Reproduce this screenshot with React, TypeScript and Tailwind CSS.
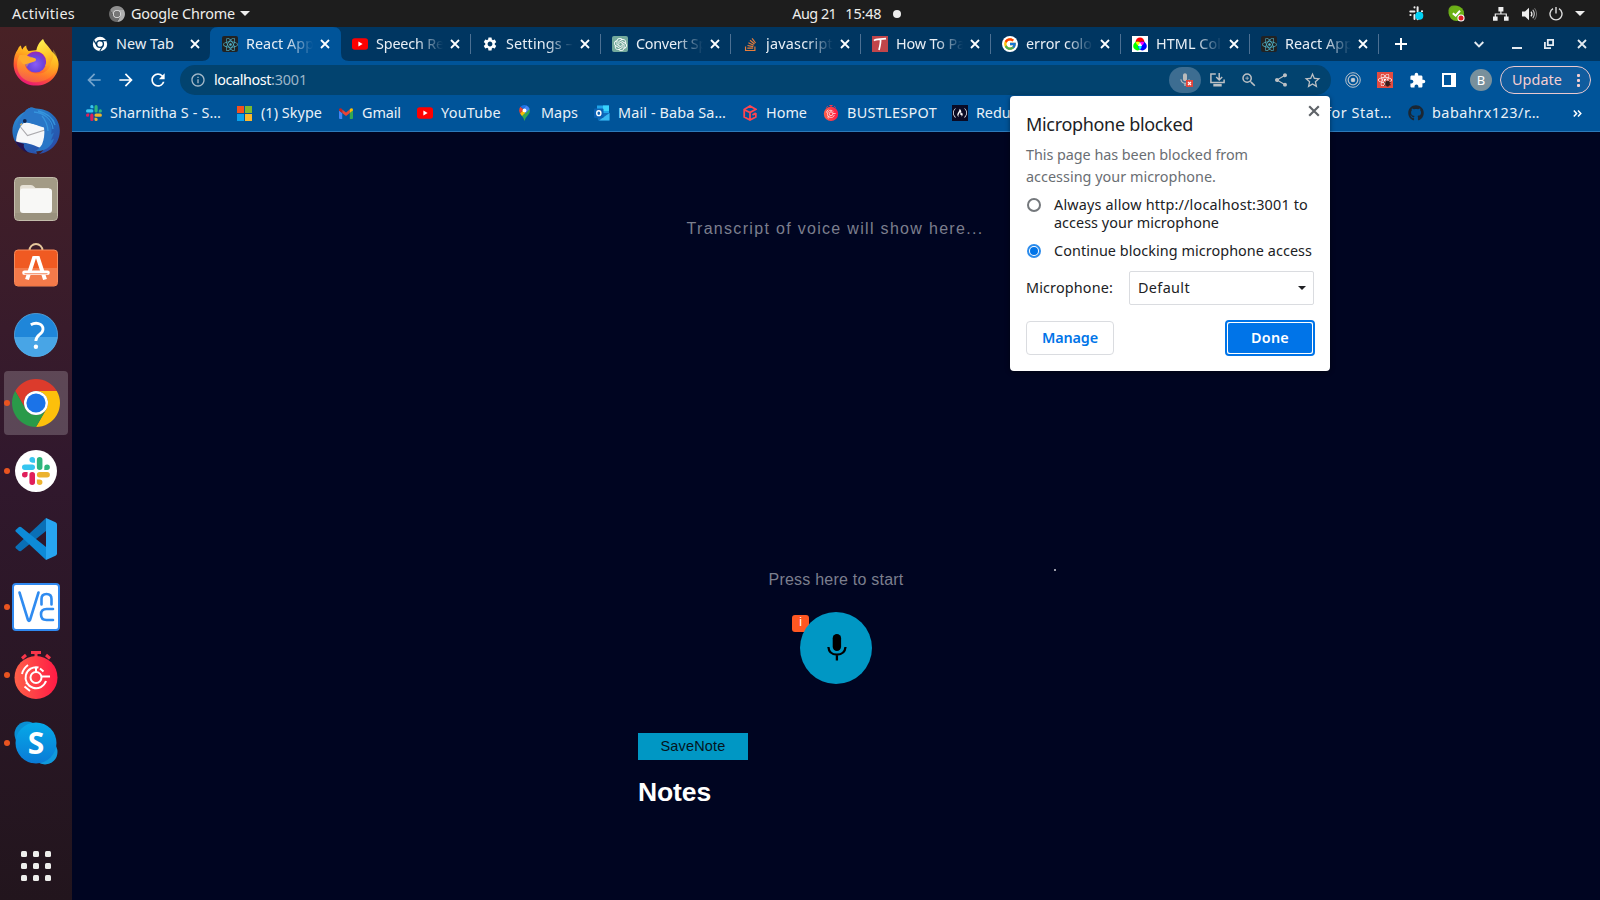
import { useLayoutEffect, useRef } from "react";
import type { ReactNode } from "react";
import { FaGithub, FaReact, FaFreeCodeCamp, FaStackOverflow } from "react-icons/fa";
import { FcGoogle } from "react-icons/fc";
import { SiOpenai } from "react-icons/si";
import {
  MdArrowBack,
  MdArrowForward,
  MdExtension,
  MdInfoOutline,
  MdMic,
  MdRefresh,
  MdSettings,
  MdShare,
  MdStarBorder,
  MdZoomIn,
} from "react-icons/md";

/** One line of text whose tracking is adjusted so that it spans `w` pixels. */
function Label({ w, className = "", children }: { w: number; className?: string; children: string }) {
  const ref = useRef<HTMLSpanElement>(null);
  useLayoutEffect(() => {
    const el = ref.current;
    if (!el) return;
    el.style.letterSpacing = "0px";
    const natural = el.getBoundingClientRect().width;
    el.style.letterSpacing = `${(w - natural) / children.length}px`;
  }, [w, children]);
  return (
    <span ref={ref} className={`inline-block whitespace-pre shrink-0 ${className}`}>
      {children}
    </span>
  );
}

function Close({ className = "", size = "size-2.5" }: { className?: string; size?: string }) {
  return (
    <svg viewBox="0 0 10 10" className={`shrink-0 ${size} ${className}`}>
      <path d="M1 1 9 9M9 1 1 9" stroke="currentColor" strokeWidth="1.8" />
    </svg>
  );
}

function SlackMark({ className = "" }: { className?: string }) {
  return (
    <svg viewBox="0 0 54 54" className={className}>
      <path fill="#36C5F0" d="M19.712.133a5.381 5.381 0 0 0-5.376 5.387 5.381 5.381 0 0 0 5.376 5.386h5.376V5.52A5.381 5.381 0 0 0 19.712.133m0 14.365H5.376A5.381 5.381 0 0 0 0 19.884a5.381 5.381 0 0 0 5.376 5.387h14.336a5.381 5.381 0 0 0 5.376-5.387 5.381 5.381 0 0 0-5.376-5.386" />
      <path fill="#2EB67D" d="M53.76 19.884a5.381 5.381 0 0 0-5.376-5.386 5.381 5.381 0 0 0-5.376 5.386v5.387h5.376a5.381 5.381 0 0 0 5.376-5.387m-14.336 0V5.52A5.381 5.381 0 0 0 34.048.133a5.381 5.381 0 0 0-5.376 5.387v14.364a5.381 5.381 0 0 0 5.376 5.387 5.381 5.381 0 0 0 5.376-5.387" />
      <path fill="#ECB22E" d="M34.048 54a5.381 5.381 0 0 0 5.376-5.387 5.381 5.381 0 0 0-5.376-5.386h-5.376v5.386A5.381 5.381 0 0 0 34.048 54m0-14.365h14.336a5.381 5.381 0 0 0 5.376-5.386 5.381 5.381 0 0 0-5.376-5.387H34.048a5.381 5.381 0 0 0-5.376 5.387 5.381 5.381 0 0 0 5.376 5.386" />
      <path fill="#E01E5A" d="M0 34.249a5.381 5.381 0 0 0 5.376 5.386 5.381 5.381 0 0 0 5.376-5.386v-5.387H5.376A5.381 5.381 0 0 0 0 34.25m14.336-.001v14.364A5.381 5.381 0 0 0 19.712 54a5.381 5.381 0 0 0 5.376-5.387V34.25a5.381 5.381 0 0 0-5.376-5.387 5.381 5.381 0 0 0-5.376 5.387" />
    </svg>
  );
}

function SlackTrayMark() {
  return (
    <svg viewBox="0 0 15 15" className="mr-6 size-[15px]">
      <g stroke="#eee" strokeWidth="2" strokeLinecap="round" fill="none">
        <path d="M5.500 1.200v.2M1.300 5.400H5.400M8.600 1.300V5.200M12.900 5.300h.2M1.400 9h.2M5.500 9V13M8.800 9H12M8.600 13v.2" />
      </g>
      <circle cx="10.300" cy="9.800" r="4" fill="#00d2f5" />
    </svg>
  );
}

function ChromeMark({ className, colors, ring, core }: { className: string; colors: [string, string, string]; ring: string; core: string }) {
  return (
    <svg viewBox="0 0 48 48" className={className}>
      <path fill={colors[0]} d="M3.22 12A24 24 0 0 1 44.78 12L24 12A12 12 0 0 0 13.6 30Z" />
      <path fill={colors[1]} d="M44.78 12A24 24 0 0 1 24 48L34.39 30A12 12 0 0 0 24 12Z" />
      <path fill={colors[2]} d="M24 48A24 24 0 0 1 3.22 12L13.6 30A12 12 0 0 0 34.39 30Z" />
      <circle cx="24" cy="24" r="12" fill={ring} />
      <circle cx="24" cy="24" r="9.6" fill={core} />
    </svg>
  );
}

function NewTabMark() {
  return (
    <svg viewBox="0 0 16 16" className="size-4">
      <circle cx="8" cy="8" r="7.2" fill="#fff" />
      <circle cx="8" cy="8" r="3.4" fill="none" stroke="#003661" strokeWidth="1.4" />
      <path d="M8 4.6h6.4M5 9.7 1.9 4.4M11 9.7 7.8 15" stroke="#003661" strokeWidth="1.2" />
    </svg>
  );
}

function ReactTile() {
  return (
    <span className="flex size-4 items-center justify-center rounded-[2px] bg-[#222]">
      <FaReact className="size-[15px] text-[#4fb3c8]" />
    </span>
  );
}

function YoutubeMark() {
  return (
    <svg viewBox="0 0 16 16" className="size-4">
      <rect x="0" y="2.2" width="16" height="11.6" rx="2.8" fill="#f00" />
      <path d="M6.4 5.6v4.8L10.6 8z" fill="#fff" />
    </svg>
  );
}

function TecmintMark() {
  return (
    <svg viewBox="0 0 16 16" className="size-4">
      <rect width="16" height="16" fill="#c1454a" />
      <path d="M2 4.6C4 2.6 8 3.6 14 2.6M8.6 3.4C8.8 7 8 10 7 14" fill="none" stroke="#fff" strokeWidth="1.7" />
    </svg>
  );
}

function GoogleTile() {
  return (
    <span className="flex size-4 items-center justify-center rounded-full bg-white">
      <FcGoogle className="size-[14px]" />
    </span>
  );
}

function ColorTile() {
  return (
    <svg viewBox="0 0 16 16" className="size-4">
      <rect width="16" height="16" fill="#fff" />
      <circle cx="8" cy="5.8" r="4.4" fill="#f00" />
      <circle cx="5.6" cy="10" r="4.4" fill="#0f0" />
      <circle cx="10.4" cy="10" r="4.4" fill="#00f" />
      <path d="M3.8 6.2A4.2 4.2 0 0 1 8 6.6L6.4 9.4A4.2 4.2 0 0 1 3.8 6.2z" fill="#ff0" />
      <path d="M12.2 6.2A4.2 4.2 0 0 0 8 6.6L9.6 9.4A4.2 4.2 0 0 0 12.2 6.2z" fill="#f0f" />
      <path d="M8 13.4A4.2 4.2 0 0 1 6.4 9.4H9.6A4.2 4.2 0 0 1 8 13.4z" fill="#0ff" />
      <path d="M8 6.2 10.200 9.900H5.800z" fill="#fff" />
    </svg>
  );
}

type TabInfo = { title: string; w: number; icon: ReactNode; narrow?: boolean; active?: boolean; divider?: boolean };

const tabs: TabInfo[] = [
  { title: "New Tab", w: 58, icon: <NewTabMark /> },
  { title: "React App", w: 68, icon: <ReactTile />, active: true },
  { title: "Speech Re", w: 68, icon: <YoutubeMark />, divider: true },
  { title: "Settings –", w: 67, icon: <MdSettings className="size-4 text-white" />, divider: true },
  {
    title: "Convert Sp",
    w: 71,
    icon: (
      <span className="flex size-4 items-center justify-center rounded-[2px] bg-[#74aa9c]">
        <SiOpenai className="size-[13px] text-white" />
      </span>
    ),
    divider: true,
  },
  { title: "javascript", w: 67, icon: <FaStackOverflow className="size-[15px] text-[#e87d3a]" />, divider: true },
  { title: "How To Pa", w: 69, icon: <TecmintMark />, divider: true },
  { title: "error colo", w: 66, icon: <GoogleTile />, divider: true },
  { title: "HTML Col", w: 65, icon: <ColorTile />, narrow: true, divider: true },
  { title: "React App", w: 68, icon: <ReactTile />, narrow: true, divider: true },
];

function Tab({ tab }: { tab: TabInfo }) {
  return (
    <div className={`relative flex h-full shrink-0 items-center pl-3 ${tab.narrow ? "w-[129px]" : "w-[130px]"} ${tab.active ? "z-10" : ""}`}>
      {tab.active && (
        <svg viewBox="0 0 148 34" className="absolute -left-2 top-0 h-[34px] w-[148px]">
          <path d="M0 34Q8 34 8 26V8Q8 0 16 0H131Q139 0 139 8V26Q139 34 147 34Z" fill="#005499" />
        </svg>
      )}
      <span className="relative flex size-4 shrink-0 items-center justify-center">{tab.icon}</span>
      <span
        className={`relative ml-2 flex shrink-0 ${tab.narrow ? "w-[66px]" : "w-[67px]"} ${
          tab.title === "New Tab" ? "" : "[mask-image:linear-gradient(90deg,#000_60%,transparent_100%)]"
        }`}
      >
        <Label w={tab.w}>{tab.title}</Label>
      </span>
      <Close className="relative ml-[7px] text-white" />
      {tab.divider && <span className="absolute -right-px top-[7px] h-5 w-px bg-[#4c7093]" />}
    </div>
  );
}

function TopBar() {
  return (
    <header className="grid h-[27px] shrink-0 grid-cols-3 items-center bg-[#1d1d1d] text-[#eeeeec]">
      <div className="flex items-center pl-3">
        <Label w={63}>Activities</Label>
        <ChromeMark className="ml-[34px] size-4" colors={["#909090", "#b0b0b0", "#6c6c6c"]} ring="#f2f2f2" core="#777" />
        <Label w={104} className="ml-1.5">Google Chrome</Label>
        <svg viewBox="0 0 10 5" className="ml-[5px] h-[5px] w-2.5">
          <path d="M0 0h10L5 5z" fill="#eee" />
        </svg>
      </div>
      <div className="flex items-center pl-[259px]">
        <Label w={44}>Aug 21</Label>
        <Label w={36} className="ml-[9px]">15:48</Label>
        <span className="ml-3 size-2 shrink-0 rounded-full bg-[#eee]" />
      </div>
      <div className="flex items-center justify-end pr-[15px]">
        <SlackTrayMark />
        <svg viewBox="0 0 17 17" className="mr-[28px] size-[17px]">
          <rect x=".5" y=".5" width="12" height="12" rx="5" fill="#6aa51d" />
          <circle cx="8.5" cy="8.5" r="7.6" fill="#6cb116" />
          <path d="M4.8 8.2 7.6 10.6 12 5.8" fill="none" stroke="#fff" strokeWidth="2" />
          <circle cx="13" cy="13" r="3.6" fill="#fff" />
          <circle cx="13" cy="13" r="2.5" fill="#e01e25" />
        </svg>
        <svg viewBox="0 0 16 14" className="mr-[13px] h-3.5 w-4" fill="#eee">
          <path d="M5.4 0h5v4.4h-5zM0 9.4h4.6v4.4H0zM11 9.4h4.6v4.4H11z" />
          <path d="M7.9 4v3M2.3 10V7h11v3" fill="none" stroke="#eee" strokeWidth="1.2" />
        </svg>
        <svg viewBox="0 0 15 14" className="mr-[12px] h-3.5 w-[15px]" fill="none" stroke="#eee">
          <path d="M0 4.5h3L7 .8v12.4L3 9.5H0z" fill="#eee" stroke="none" />
          <path d="M9 4.6q1.8 2.4 0 4.8" strokeWidth="1.3" />
          <path d="M10.8 2.8q3 4.2 0 8.4" strokeWidth="1.1" stroke="#ccc" />
          <path d="M12.6 1.2q4 5.8 0 11.6" strokeWidth="1" stroke="#777" />
        </svg>
        <svg viewBox="0 0 14 14" className="mr-[12px] size-3.5" fill="none" stroke="#ddd" strokeWidth="1.4">
          <path d="M4 1.7a6 6 0 1 0 6 0M7 0v6.6" />
        </svg>
        <svg viewBox="0 0 10 5" className="h-[5px] w-2.5">
          <path d="M0 0h10L5 5z" fill="#eee" />
        </svg>
      </div>
    </header>
  );
}

function DockItem({ children, running, active }: { children: ReactNode; running?: boolean; active?: boolean }) {
  return (
    <div className={`relative flex size-16 shrink-0 items-center justify-center rounded ${active ? "bg-white/20" : ""}`}>
      {running && <span className="absolute left-0 top-[29px] size-1.5 rounded-full bg-[#e95420]" />}
      {children}
    </div>
  );
}

function FirefoxIcon() {
  return (
    <svg viewBox="0 0 48 48" className="size-12">
      <defs>
        <linearGradient id="ffBody" x1=".75" y1=".05" x2=".3" y2="1">
          <stop offset="0" stopColor="#ffe226" />
          <stop offset=".35" stopColor="#ffa51f" />
          <stop offset=".65" stopColor="#ff5a2f" />
          <stop offset="1" stopColor="#e8127c" />
        </linearGradient>
        <linearGradient id="ffTail" x1=".4" y1="0" x2=".7" y2="1">
          <stop offset="0" stopColor="#fff04f" />
          <stop offset=".6" stopColor="#ffc62b" />
          <stop offset="1" stopColor="#ff9a20" />
        </linearGradient>
        <radialGradient id="ffGlobe" cx=".5" cy=".6" r=".6">
          <stop offset="0" stopColor="#8a5cf5" />
          <stop offset=".6" stopColor="#6b45dd" />
          <stop offset="1" stopColor="#9a27b4" />
        </radialGradient>
      </defs>
      <path d="M6 10c.6-1.6 1.6-2.8 3-3.4.1 1.6.6 3 1.6 4 .4-1.6 1.6-3.2 3.6-4 0 2.2.8 4 2.4 5.4L34 10C41 12 46.600 18 46.600 25 46.600 37 37 46.600 24 46.600S1.600 37 1.600 25C1.600 19 3 14 6 10Z" fill="url(#ffBody)" />
      <circle cx="23.600" cy="23" r="10.600" fill="url(#ffGlobe)" />
      <path d="M31 0c-1 3 1 6 3.600 9.600C38 14 38 20 35 24c3-1 4-3 4.400-5 .8 9-5 15.600-13 15.600C17 35 12 29 12.600 22c.2 3 1 5 2.400 6 1-3 3-4.600 6-5 2-.2 3.400-1 3-2.200-.6-1.600-3-1.800-6-3.200-3-1-6-2-9.600-1.600C4 20 4 30 8 36c4 6 12 8 18 7 11-1 19-9 19.600-18C46 17 43 13 41 10.600c0 1.400 0 2 .2 3C37 8 33 6 31 0Z" fill="url(#ffTail)" opacity=".4" />
      <path d="M31 0c-3 2.600-6.400 7-6.600 12 5 .4 9 4 9.800 8 .6 3-.2 5.600-1.400 7.600 5-2 8-6 8.600-11C39 8 33 6 31 0Z" fill="url(#ffTail)" />
      <path d="M7 16.500c5-1.600 9 .6 11 1.800 2.600.6 6 .6 6 2.300 0 1.700-3 2.200-5 3-3 .8-5 2.400-8 1.400-2-2-4-5-4-8.500Z" fill="#ffab2c" />
    </svg>
  );
}

function ThunderbirdIcon() {
  return (
    <svg viewBox="0 0 48 48" className="size-12">
      <defs>
        <linearGradient id="tbBody" x1=".2" y1="0" x2=".8" y2="1">
          <stop offset="0" stopColor="#2f8fd6" />
          <stop offset=".5" stopColor="#2266b8" />
          <stop offset="1" stopColor="#2c4aa6" />
        </linearGradient>
      </defs>
      <path d="M19 .6c2-.4 3 .6 5 1 13 .2 23.600 9 23.800 21.600C48 36 39 45 27 47c3-2 5-4 5-6l-8 3c1 1 .4 2 1 3C10 46 .2 36 .4 23.600.600 15 6 8 13 4.600 14 2.600 17 1 19 .6Z" fill="url(#tbBody)" />
      <path d="M4 36C12 34 22 38 31 42l3-22-21-5C8 18 4 27 4 36Z" fill="#f6f7f9" />
      <path d="M8.500 20 15.500 28.500 33 23" fill="none" stroke="#aaa9ad" strokeWidth="1.100" />
      <path d="M3 34c3 6 8 10 14 12-4-3-6-6-5-9Z" fill="#24124f" />
      <path d="M19 .6c-4 1-6 3-7 6-4 4-7 9-7 15 2-4 5-6 9-6 5 0 8 2 18 5 1 6 0 12-2 17-2 3-5 6-8 7 10 0 18-4 20-13l-3 2 3-8-3 2c2-8-1-16-9-20-3-4-7-6-11-7Z" fill="#2976c7" />
      <path d="M22 5c10 1 18 7 19 17M26 4c9 2 15 7 17 14M30 9c3 3 6 10 6 15" fill="none" stroke="#3a9ce2" strokeWidth="1.300" opacity=".8" />
      <circle cx="12.800" cy="14" r="1.900" fill="#132850" />
      <path d="M10 16.500 8.200 18.200" stroke="#d9b26a" strokeWidth="1.200" />
    </svg>
  );
}

function FilesIcon() {
  return (
    <svg viewBox="0 0 44 44" className="size-11">
      <rect x=".5" y=".5" width="43" height="43" rx="4" fill="#a39b86" stroke="#c3bcab" />
      <path d="M1 36h42v4q0 3-3 3H4q-3 0-3-3z" fill="#928a76" opacity=".5" />
      <path d="M6 11q0-3 3-3h8q2 0 3 1.500l1.500 1.500H35v6H6z" fill="#e6e1d6" />
      <rect x="6" y="11.500" width="32" height="24.500" rx="3" fill="#f8f8f6" />
    </svg>
  );
}

function SoftwareIcon() {
  return (
    <svg viewBox="0 0 44 44" className="-mt-1 size-11">
      <path d="M15.500 9V7.500a6.500 6.500 0 0 1 13 0V9" fill="none" stroke="#e6c79c" strokeWidth="2" />
      <rect x=".5" y="7" width="43" height="36" rx="3.500" fill="#f05a22" stroke="#f58a5b" />
      <path d="M1 25h42v14.500q0 3-3 3H4q-3 0-3-3z" fill="#f37a4a" />
      <g stroke="#fff" fill="none">
        <path d="M20.500 13.500 13 36.500M23.500 13.500 31 36.500" strokeWidth="4" />
        <path d="M10.500 29.800H33.500" strokeWidth="4.600" strokeLinecap="round" />
      </g>
      <path d="M19 13h6l-1 2h-4z" fill="#fff" />
      <path d="M10.500 30.800H33.500" stroke="#f37a4a" strokeWidth="1" />
    </svg>
  );
}

function HelpIcon() {
  return (
    <svg viewBox="0 0 44 44" className="size-11">
      <circle cx="22" cy="22" r="21.600" fill="#1f86d9" />
      <path d="M.5 24h43A21.600 21.600 0 0 1 .5 24z" fill="#48a5e6" />
      <circle cx="22" cy="22" r="21.600" fill="none" stroke="#5db4ee" strokeWidth=".7" />
      <path d="M16.800 11.800C21 9.300 29 9.500 29 16.200 29 21.500 21.800 21.500 21.800 28" fill="none" stroke="#fff" strokeWidth="2.800" />
      <circle cx="21.900" cy="33.800" r="2.200" fill="#fff" />
    </svg>
  );
}

function VsCodeIcon() {
  return (
    <svg viewBox="0 0 42 42" className="size-[42px]">
      <path d="M31 0 .9 28.200q-1 1 0 2l2.800 2.600q1.100.9 2.300.1L31 13z" fill="#0a6fb6" />
      <path d="M31 42 .9 13.800q-1-1 0-2L3.700 9.200q1.100-.9 2.300-.1L31 29z" fill="#0d8bd8" />
      <path d="M31 0 40.500 4.200Q42 5 42 6.500V35.500Q42 37 40.500 37.800L31 42z" fill="#27a5f0" />
    </svg>
  );
}

function VncIcon() {
  return (
    <svg viewBox="0 0 48 48" className="size-12">
      <rect x="1" y="1" width="46" height="46" rx="3" fill="#fff" stroke="#3089f0" strokeWidth="2" />
      <g fill="none" stroke="#2f8bf0" strokeWidth="2.600" strokeLinecap="round" strokeLinejoin="round">
        <path d="M7.500 9.500 16 37q1 2 2 0L26.500 9.500" />
        <path d="M29.500 21.500V16q0-5 5-5t5 5v5.500" />
        <path d="M41 26H34.500q-5.500 0-5.500 5.500T34.500 37H41" />
      </g>
    </svg>
  );
}

function TimerIcon({ className }: { className: string }) {
  return (
    <svg viewBox="0 0 44 48" className={className}>
      <defs>
        <linearGradient id="timerFill" x1="0" x2="1">
          <stop offset="0" stopColor="#ff6048" />
          <stop offset="1" stopColor="#ff1a45" />
        </linearGradient>
      </defs>
      <g stroke="#f8354a" strokeWidth="3" fill="none">
        <path d="M17 1.500H27M22 1v5M8 7.500 12 4M36 7.500 32 4" />
      </g>
      <circle cx="22" cy="26.500" r="21.500" fill="url(#timerFill)" />
      <g stroke="#fff" strokeWidth="2" fill="none">
        <circle cx="22" cy="26.500" r="5.500" />
        <path d="M24.500 16.500A10.500 10.500 0 1 0 32 30M22 21V15.500M27.500 25.500H36M14 14A15 15 0 0 0 8 23M10.500 35.500 16 40M12 31.500l5 4.500M26 17.500l3.500 3" />
      </g>
    </svg>
  );
}

function SkypeIcon() {
  return (
    <svg viewBox="0 0 44 44" className="size-11">
      <defs>
        <linearGradient id="skypeFill" x1="0" y1="0" x2="0" y2="1">
          <stop offset="0" stopColor="#06a9e8" />
          <stop offset="1" stopColor="#0a7bd6" />
        </linearGradient>
      </defs>
      <circle cx="13" cy="13" r="12.500" fill="#0a8ed2" />
      <circle cx="31" cy="31" r="12.500" fill="#1099dc" />
      <circle cx="22" cy="22" r="20.500" fill="url(#skypeFill)" />
      <text x="22" y="32.500" textAnchor="middle" fontSize="30" fontWeight="700" fill="#fff" fontFamily="Open Sans, sans-serif">S</text>
    </svg>
  );
}

function Dock() {
  return (
    <nav className="flex w-[72px] shrink-0 flex-col items-center gap-1 bg-linear-to-b from-[#482125] via-[#31182d] via-50% to-[#22151d] pt-1">
      <DockItem><FirefoxIcon /></DockItem>
      <DockItem><ThunderbirdIcon /></DockItem>
      <DockItem><FilesIcon /></DockItem>
      <DockItem><SoftwareIcon /></DockItem>
      <DockItem><HelpIcon /></DockItem>
      <DockItem running active>
        <ChromeMark className="size-12" colors={["#dc3b2c", "#fcc00b", "#2a9a49"]} ring="#fff" core="#1b73e8" />
      </DockItem>
      <DockItem running>
        <span className="flex size-[42px] items-center justify-center rounded-full bg-white">
          <SlackMark className="size-7" />
        </span>
      </DockItem>
      <DockItem><VsCodeIcon /></DockItem>
      <DockItem running><VncIcon /></DockItem>
      <DockItem running><TimerIcon className="h-12 w-11" /></DockItem>
      <DockItem running><SkypeIcon /></DockItem>
      <div className="mt-auto mb-[19px] grid grid-cols-3 gap-1.5">
        {Array.from({ length: 9 }, (_, i) => (
          <span key={i} className="size-1.5 rounded-[1.5px] bg-[#eeeeec]" />
        ))}
      </div>
    </nav>
  );
}

function TabStrip() {
  return (
    <div className="flex h-[34px] shrink-0 items-center bg-[#003661] pl-2 text-[#e8eff6]">
      {tabs.map((tab, i) => (
        <Tab key={i} tab={tab} />
      ))}
      <svg viewBox="0 0 12 12" className="ml-[17px] size-3 shrink-0">
        <path d="M6 0v12M0 6h12" stroke="#fff" strokeWidth="2" />
      </svg>
      <div className="ml-auto flex items-center pr-[13px] text-[#e5ebf1]">
        <svg viewBox="0 0 10 7" className="h-[7px] w-2.5">
          <path d="M.7 1 5 5.300 9.300 1" fill="none" stroke="currentColor" strokeWidth="1.900" />
        </svg>
        <span className="ml-[28px] mt-2 h-0.5 w-2.5 bg-current" />
        <svg viewBox="0 0 10 10" className="ml-[22px] size-2.5" fill="none" stroke="currentColor" strokeWidth="1.800">
          <path d="M3.800.9H9.100V6.200H3.800zM.9 3V9.100H7" />
        </svg>
        <Close className="ml-[23px]" />
      </div>
    </div>
  );
}

function Toolbar() {
  return (
    <div className="flex h-[38px] shrink-0 items-center bg-[#005499] text-white">
      <div className="flex items-center pl-3">
        <MdArrowBack className="size-5 text-[#74a4cc]" />
        <MdArrowForward className="ml-3 size-5" />
        <MdRefresh className="ml-3 size-5" />
      </div>
      <div className="ml-3 flex h-[30px] w-[1151px] items-center rounded-full bg-[#02436f] pl-[10px] pr-[9px] text-[#b9c7d3]">
        <MdInfoOutline className="size-4 text-[#a5b9c9]" />
        <Label w={57} className="ml-2 text-white">localhost</Label>
        <Label w={36} className="text-[#9db6ca]">:3001</Label>
        <span className="ml-auto flex h-[26px] w-8 items-center justify-center rounded-full bg-[#3d6d91]">
          <span className="relative size-4 text-[#bbb]">
            <MdMic className="size-4" />
            <svg viewBox="0 0 7 7" className="absolute left-[9px] top-[8px] size-[7px]">
              <rect width="7" height="7" fill="#e2453c" />
              <path d="M2 2l3 3M5 2 2 5" stroke="#fff" strokeWidth="1.100" />
            </svg>
          </span>
        </span>
        <svg viewBox="0 0 15 14" className="ml-[9px] h-3.5 w-[15px]" fill="none" stroke="#bcc0c4" strokeWidth="1.500">
          <path d="M5.800.9H.9V9.500H14.100V6.500M9.200 0V6.500M6.200 4 9.200 7 12.200 4" />
          <path d="M3.300 12.200H11.700" strokeWidth="2.600" />
        </svg>
        <MdZoomIn className="ml-[15px] size-[18px] text-[#bcc0c4]" />
        <MdShare className="ml-[15px] size-4 text-[#bcc0c4]" />
        <MdStarBorder className="ml-[14px] size-[19px] text-[#bcc0c4]" />
      </div>
      <div className="ml-[14px] flex items-center">
        <svg viewBox="0 0 16 16" className="size-4" fill="none" stroke="#b5c0cb">
          <circle cx="8" cy="8" r="7.300" strokeWidth="1" />
          <circle cx="8" cy="8" r="4.800" strokeWidth="1.200" />
          <circle cx="8" cy="8" r="1.600" fill="#ccd4dc" strokeWidth="1.400" />
        </svg>
        <span className="relative ml-4 flex size-4 items-center justify-center bg-[#e34b40]">
          <FaReact className="size-3.5 text-white" />
          <svg viewBox="0 0 7 7" className="absolute bottom-px right-0.5 size-[7px]" fill="#3b1d1b" stroke="#3b1d1b" strokeWidth=".8">
            <ellipse cx="3.600" cy="3.700" rx="2" ry="2.600" />
            <path d="M0 2.500 7 5M0 5.500 7 2M1.500.500 3 2M6 .500 4 2" />
          </svg>
        </span>
        <MdExtension className="ml-4 size-[17px]" />
        <svg viewBox="0 0 14 14" className="ml-4 size-3.5">
          <path d="M0 0h14v14H0zM2 2v10h7V2z" fill="#fff" fillRule="evenodd" />
        </svg>
        <span className="ml-[14px] flex size-[22px] items-center justify-center rounded-full bg-[#78909c] text-[13px] leading-none text-white">B</span>
        <span className="ml-2 flex h-7 w-[91px] items-center rounded-full border border-[#e9c9cf] bg-[#105c9e] pl-[11px] text-[#f5cfd2]">
          <Label w={50}>Update</Label>
          <svg viewBox="0 0 3 13" className="ml-[15px] h-[13px] w-[3px]" fill="#f5cfd2">
            <rect width="3" height="3" rx="1" />
            <rect y="5" width="3" height="3" rx="1" />
            <rect y="10" width="3" height="3" rx="1" />
          </svg>
        </span>
      </div>
    </div>
  );
}

function MicrosoftMark() {
  return (
    <svg viewBox="0 0 15 15" className="mr-0.5 size-[15px] shrink-0">
      <path fill="#f4511e" d="M0 0h7v7H0z" />
      <path fill="#7cb82f" d="M8 0h7v7H8z" />
      <path fill="#0aa1ec" d="M0 8h7v7H0z" />
      <path fill="#fcb72b" d="M8 8h7v7H8z" />
    </svg>
  );
}

function GmailMark() {
  return (
    <svg viewBox="0 0 14 11" className="h-[11px] w-3.5">
      <path fill="#4285f4" d="M0 2.500 3.200 5v6H1Q0 11 0 10z" />
      <path fill="#34a853" d="M14 2.500 10.800 5v6H13q1 0 1-1z" />
      <path fill="#ea4335" d="M3.200 1.500 7 4.400l3.800-2.900V5L7 8 3.200 5z" />
      <path fill="#c5221f" d="M0 1.500Q.6-.6 3.200 1V5L0 2.600z" />
      <path fill="#fbbc04" d="M14 1.500Q13.400-.6 10.800 1V5L14 2.600z" />
    </svg>
  );
}

function MapsMark() {
  return (
    <svg viewBox="0 0 11 16" className="mr-px h-4 w-[11px]">
      <path fill="#34a853" d="M5.500 16Q5 13 2.500 10.500L10.600 4Q11.600 7 9.400 9.500 6.500 12.500 5.500 16z" />
      <path fill="#fbbc04" d="M1 8.500 4.500 4.500 7.600 6.500 3 11z" />
      <path fill="#ea4335" d="M.2 5.500Q.1 3.300 1.400 1.700L4.800 4.300 1 8.500Q.3 7 .2 5.500z" />
      <path fill="#1a73e8" d="M1.400 1.700Q4-.7 7 .3L4.800 4.300z" />
      <path fill="#4285f4" d="M7 .3Q9.700 1.200 10.700 4L6.600 8.500 4.800 4.300z" />
      <circle cx="5.500" cy="5.400" r="1.900" fill="#fff" />
    </svg>
  );
}

function OutlookMark() {
  return (
    <svg viewBox="0 0 16 16" className="size-4">
      <path fill="#1fa4ea" d="M3 .5h12v9H3z" />
      <path fill="#38d3fb" d="M9 .5h6V6H9z" />
      <path fill="#0f6dbd" d="M3 8h12.500v7.500H4z" />
      <path fill="#37b9f2" d="M15.500 8v7.500H5z" />
      <rect y="3.500" width="9.500" height="9.500" rx="1" fill="#0b62b5" />
      <ellipse cx="4.800" cy="8.200" rx="2.100" ry="2.400" fill="none" stroke="#fff" strokeWidth="1.400" />
    </svg>
  );
}

function CubeMark() {
  return (
    <svg viewBox="0 0 14 16" className="h-4 w-3.5" fill="none" stroke="#ff4550" strokeWidth="1.800">
      <path d="M12.800 8V12L7 15 1.200 12V4.500L7 1l5.800 3.300L7 7.600 1.200 4.800M7 7.600V15M9.500 10 12.800 8" />
    </svg>
  );
}

function Bookmark({ icon, label, w, gap }: { icon: ReactNode; label: string; w: number; gap: string }) {
  return (
    <span className={`flex shrink-0 items-center ${gap}`}>
      <span className="mr-2 flex size-4 items-center justify-center">{icon}</span>
      <Label w={w}>{label}</Label>
    </span>
  );
}

function BookmarkBar() {
  return (
    <div className="flex h-[33px] shrink-0 items-center overflow-hidden border-b border-[#2d7ab9] bg-[#005499] pb-1 text-[#e9f1f8]">
      <Bookmark gap="ml-[14px]" icon={<SlackMark className="size-4" />} label="Sharnitha S - S…" w={111} />
      <Bookmark gap="ml-4" icon={<MicrosoftMark />} label="(1) Skype" w={61} />
      <Bookmark gap="ml-4" icon={<GmailMark />} label="Gmail" w={39} />
      <Bookmark gap="ml-4" icon={<YoutubeMark />} label="YouTube" w={60} />
      <Bookmark gap="ml-4" icon={<MapsMark />} label="Maps" w={37} />
      <Bookmark gap="ml-4" icon={<OutlookMark />} label="Mail - Baba Sa…" w={108} />
      <Bookmark gap="ml-4" icon={<CubeMark />} label="Home" w={41} />
      <Bookmark gap="ml-4" icon={<TimerIcon className="size-4" />} label="BUSTLESPOT" w={90} />
      <Bookmark
        gap="ml-[15px]"
        icon={
          <span className="flex size-4 items-center justify-center bg-[#0a0a23]">
            <FaFreeCodeCamp className="size-3.5 text-white" />
          </span>
        }
        label="Redux"
        w={42}
      />
      <span className="ml-auto flex items-center pr-[18px]">
        <Label w={66}>for Stat…</Label>
        <Bookmark gap="ml-4" icon={<FaGithub className="size-4 text-[#1b2733]" />} label="babahrx123/r…" w={108} />
        <svg viewBox="0 0 9 7" className="ml-[33px] h-[7px] w-[9px]" fill="none" stroke="#fff" strokeWidth="1.500">
          <path d="M.8.600 3.600 3.500.800 6.400M5 .600 7.800 3.500 5 6.400" />
        </svg>
      </span>
    </div>
  );
}

function Page() {
  return (
    <main className="flex min-h-0 flex-1 flex-col bg-[#000521] font-['Liberation_Sans',sans-serif]">
      <div className="mx-auto flex w-[396px] flex-col pt-[87px]">
        <p className="flex h-5 items-center justify-center pr-0.5 text-[16px] leading-5 text-[#7c7f8e]">
          <Label w={297}>Transcript of voice will show here...</Label>
        </p>
        <div className="mt-[330px] -mr-[22px] flex justify-end">
          <span className="size-0.5 bg-[#9a9ca8]" />
        </div>
        <p className="-mt-px flex h-5 items-center justify-center text-[16px] leading-5 text-[#7c7f8e]">
          <Label w={135}>Press here to start</Label>
        </p>
        <div className="relative mx-auto mt-[22px] size-[72px]">
          <span className="absolute -left-2 top-[3px] flex size-[17px] items-start justify-center rounded-[3px] bg-[#ff5722] pt-px text-[12px] leading-[13px] text-white">i</span>
          <button className="relative flex size-[72px] items-center justify-center rounded-full bg-[#0097c4] text-black">
            <svg viewBox="0 0 20 27" className="-mt-0.5 ml-px h-[27px] w-5">
              <rect x="5.700" y="0" width="8.400" height="17" rx="4.200" />
              <path d="M1.400 13q.6 7.600 8.500 7.600T18.500 13M9.900 20V26.500" fill="none" stroke="#000" strokeWidth="2.300" />
            </svg>
          </button>
        </div>
        <button className="mt-[49px] flex h-[27px] w-[110px] items-center justify-center bg-[#0097c4] pb-px text-[14.5px] text-[#05141c]">
          <Label w={65}>SaveNote</Label>
        </button>
        <h2 className="mt-[17px] flex h-[30px] items-center text-[26.5px] font-bold text-white">
          <Label w={73}>Notes</Label>
        </h2>
      </div>
    </main>
  );
}

function PermissionPopup() {
  return (
    <section className="absolute left-[1010px] top-[96px] z-20 flex h-[275px] w-[320px] flex-col rounded bg-white px-4 text-[#202124] shadow-[0_1px_5px_rgba(0,0,0,0.45)]">
      <Close size="size-3" className="absolute right-[10px] top-[9px] text-[#5f6368]" />
      <h1 className="mt-[15px] flex h-[26px] items-center text-[18px]">
        <Label w={167}>Microphone blocked</Label>
      </h1>
      <p className="mt-[7px] flex flex-col items-start text-[#6a6e73]">
        <Label w={222} className="leading-[22px]">This page has been blocked from</Label>
        <Label w={190} className="leading-[22px]">accessing your microphone.</Label>
      </p>
      <div className="mt-[8px] flex">
        <span className="ml-[1px] mt-[2px] size-3.5 shrink-0 rounded-full border-2 border-[#74787c]" />
        <span className="ml-[13px] flex flex-col items-start">
          <Label w={254} className="leading-[18px]">Always allow http://localhost:3001 to</Label>
          <Label w={165} className="leading-[18px]">access your microphone</Label>
        </span>
      </div>
      <div className="mt-[10px] flex items-center">
        <span className="ml-[1px] flex size-3.5 shrink-0 items-center justify-center rounded-full border-2 border-[#2a8bec]">
          <span className="size-2 rounded-full bg-[#0074e8]" />
        </span>
        <Label w={258} className="ml-[13px] leading-[18px]">Continue blocking microphone access</Label>
      </div>
      <div className="mt-[11px] flex items-center">
        <Label w={87}>Microphone:</Label>
        <span className="ml-auto flex h-[34px] w-[185px] items-center rounded-[2px] border border-[#dadce0] pl-2 pr-[7px]">
          <Label w={52}>Default</Label>
          <svg viewBox="0 0 8 4" className="ml-auto h-1 w-2">
            <path d="M0 0h8L4 4z" fill="#202124" />
          </svg>
        </span>
      </div>
      <div className="mt-[15px] -mr-[1px] flex items-center justify-between font-semibold">
        <button className="flex h-[34px] w-[88px] items-center justify-center rounded border border-[#dadce0] text-[#0074e8]">
          <Label w={56}>Manage</Label>
        </button>
        <button className="flex h-9 w-[90px] items-center justify-center rounded border-2 border-[#0074e8] p-px">
          <span className="flex size-full items-center justify-center rounded-[2px] bg-[#0074e8] text-white">
            <Label w={38}>Done</Label>
          </span>
        </button>
      </div>
    </section>
  );
}

export default function App() {
  return (
    <div className="relative flex h-[900px] w-[1600px] flex-col overflow-hidden font-['Noto_Sans',sans-serif] text-[14.4px] leading-5">
      <TopBar />
      <div className="flex min-h-0 flex-1">
        <Dock />
        <div className="flex min-w-0 flex-1 flex-col">
          <TabStrip />
          <Toolbar />
          <BookmarkBar />
          <Page />
        </div>
      </div>
      <PermissionPopup />
    </div>
  );
}
